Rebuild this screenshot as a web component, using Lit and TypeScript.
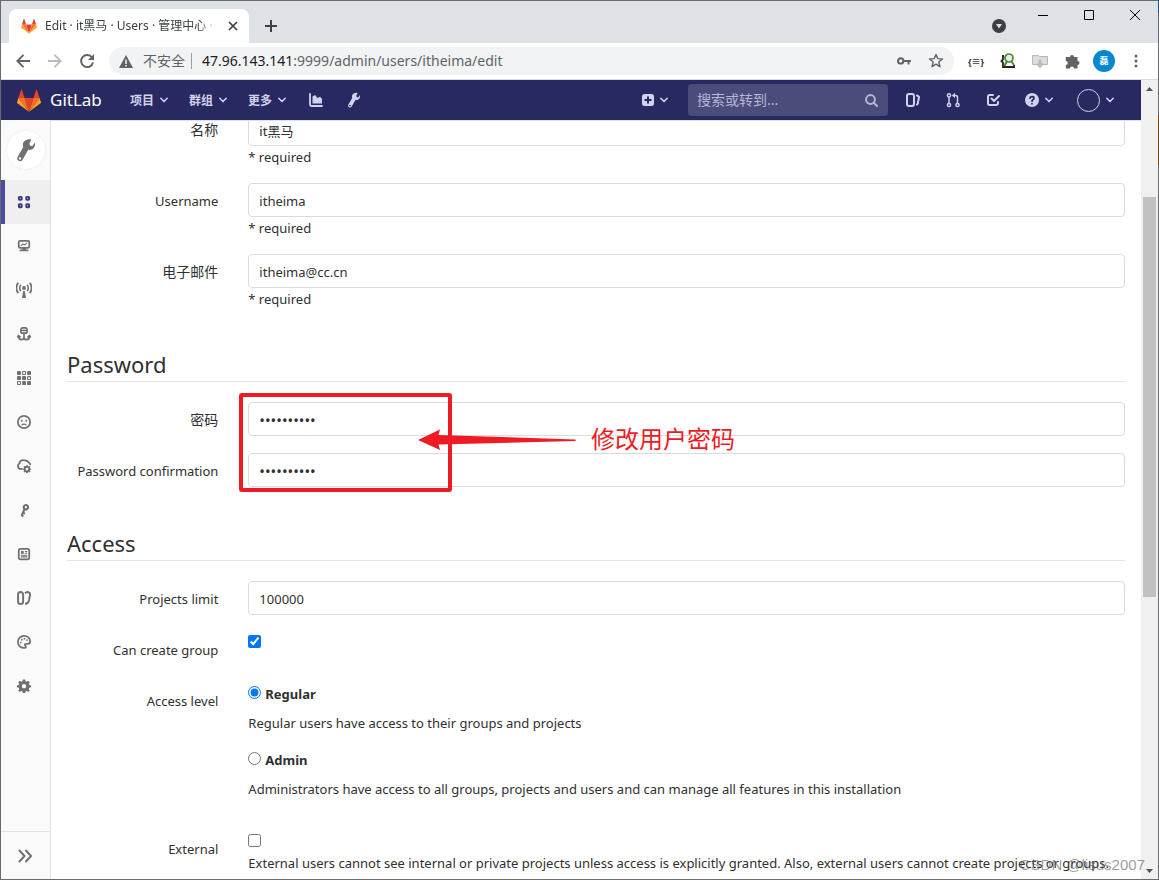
import { LitElement, html, css, svg } from "lit";
import { customElement } from "lit/decorators.js";
import { classMap } from "lit/directives/class-map.js";

const tanuki = html`<svg class="tanuki" viewBox="0 0 36 34" aria-hidden="true">
  <path fill="#e24329" d="M18 34 24.6 13.4H11.4z" />
  <path fill="#fc6d26" d="M18 34 11.4 13.4H2.1z" />
  <path fill="#fca326" d="M2.1 13.4.1 19.6a1.4 1.4 0 0 0 .5 1.5L18 34z" />
  <path fill="#e24329" d="M2.1 13.4h9.3L7.4 1.1a.7.7 0 0 0-1.3 0z" />
  <path fill="#fc6d26" d="M18 34l6.6-20.6h9.3z" />
  <path fill="#fca326" d="M33.9 13.4l2 6.2a1.4 1.4 0 0 1-.5 1.5L18 34z" />
  <path fill="#e24329" d="M33.9 13.4h-9.3l4-12.3a.7.7 0 0 1 1.3 0z" />
</svg>`;

const wrench = svg`<path fill="currentColor" fill-rule="evenodd" d="M11.600.9 10.300 3.600l.4 1.500 1.500.3 1.700-2.300c.4 1.900-.3 3.500-1.700 4.400-.9.500-1.800.6-2.700.4l-3.800 6.600a1.900 1.900 0 0 1-3.300-1.900L6.200 6c-.5-1.100-.4-2.300.2-3.300C7.400 1.200 9.400.4 11.600.9zM4 12.800a.8.8 0 1 0 0 1.600.8.8 0 0 0 0-1.600z"/>`;

const gear = svg`<path fill="currentColor" fill-rule="evenodd" d="M6.700.5h2.600l.4 2 1.300.6 1.800-1.100 1.800 1.800-1.100 1.800.5 1.300 2 .4v2.200l-2 .5-.5 1.300 1.100 1.700-1.700 1.800-1.800-1-1.300.5-.4 2.200H6.600l-.4-2.200-1.300-.5-1.800 1L1.400 13l1.100-1.700L2 10l-2-.5V7.300l2-.4.500-1.300-1.100-1.800L3.200 2 5 3.100l1.300-.6zM8 5.700a2.500 2.500 0 1 0 0 5 2.500 2.500 0 0 0 0-5z"/>`;

const sideItems = [
  { name: "Overview", size: 14, glyph: svg`<g fill="none" stroke="currentColor" stroke-width="2.200"><rect x="2.100" y="2.100" width="3.300" height="3.300" rx=".8"/><rect x="10.600" y="2.100" width="3.300" height="3.300" rx=".8"/><rect x="2.100" y="10.600" width="3.300" height="3.300" rx=".8"/><rect x="10.600" y="10.600" width="3.300" height="3.300" rx=".8"/></g>` },
  { name: "Monitoring", size: 14, glyph: svg`<path fill="none" stroke="currentColor" stroke-width="2" d="M3.500 2h9a1.500 1.500 0 0 1 1.500 1.500v5a1.500 1.500 0 0 1-1.500 1.500h-9A1.500 1.500 0 0 1 2 8.500v-5A1.500 1.500 0 0 1 3.500 2z"/><path fill="none" stroke="currentColor" stroke-width="1.200" d="M4.500 7.800 6.600 5.600l2.200 1.200 2.700-2.400"/><path fill="currentColor" d="M6 10h4v2h2a1 1 0 0 1 1 1v1H3v-1a1 1 0 0 1 1-1h2z"/>` },
  { name: "Messages", size: 16, glyph: svg`<circle cx="8" cy="6" r="1.900" fill="currentColor"/><path fill="currentColor" d="M7.200 9h1.600l1.200 7H6z"/><g fill="none" stroke="currentColor" stroke-width="1.700"><path d="M4.900 3a4.400 4.400 0 0 0 0 6M11.100 3a4.400 4.400 0 0 1 0 6M2.300.8a8 8 0 0 0 0 10.400M13.700.8a8 8 0 0 1 0 10.400"/></g>` },
  { name: "System Hooks", size: 14, glyph: svg`<g fill="none" stroke="currentColor" stroke-width="1.900"><rect x="4.500" y="1" width="7" height="6" rx="2"/><path d="M4.500 4h7M8 7v7.500M1.800 10.500c0 2.700 1.500 4 3.300 4 1.500 0 2.900-1 2.900-2.500 0 1.500 1.400 2.500 2.900 2.500 1.800 0 3.300-1.300 3.300-4M0 11.800l1.800-2 2.200 2M12 11.800l2.200-2 1.800 2"/></g>` },
  { name: "Applications", size: 14, glyph: svg`<g fill="currentColor"><rect x="0" y="0" width="4.500" height="4.500" rx="1"/><rect x="11.500" y="0" width="4.500" height="4.500" rx="1"/><rect x="0" y="5.800" width="4.500" height="4.500" rx="1"/><rect x="5.800" y="5.800" width="4.500" height="4.500" rx="1"/><rect x="5.800" y="11.500" width="4.500" height="4.500" rx="1"/><rect x="11.500" y="11.500" width="4.500" height="4.500" rx="1"/></g><g fill="none" stroke="currentColor" stroke-width="1.200"><rect x="6.400" y=".6" width="3.300" height="3.300" rx=".6"/><rect x="12.100" y="6.400" width="3.300" height="3.300" rx=".6"/><rect x=".6" y="12.100" width="3.300" height="3.300" rx=".6"/></g>` },
  { name: "Abuse Reports", size: 14, glyph: svg`<circle cx="8" cy="8" r="7" fill="none" stroke="currentColor" stroke-width="2"/><circle cx="5.400" cy="6.500" r="1.100" fill="currentColor"/><circle cx="10.600" cy="6.500" r="1.100" fill="currentColor"/><path fill="none" stroke="currentColor" stroke-width="1.400" stroke-linecap="round" d="M5.600 11.300c1.200-1.300 3.600-1.300 4.800 0"/>` },
  { name: "Kubernetes", size: 14, glyph: svg`<path fill="none" stroke="currentColor" stroke-width="2" stroke-linecap="round" d="M5.500 11.300H4.300a3.300 3.300 0 0 1-1.500-6.200C2.800 2.500 5.500.5 8 1.500c1.800-.2 4.500.3 5.200 2.500 1.300.3 1.800 1 1.900 2.200"/><g transform="translate(6.600 6.600) scale(.6)">${gear}</g>` },
  { name: "Deploy Keys", size: 14, glyph: svg`<path fill="none" stroke="currentColor" stroke-width="2.400" d="M10.400 2.300a2.500 2.500 0 1 1-.9 4.900 2.500 2.500 0 0 1 .9-4.900zM8.600 7 5.300 14.500M6.600 11l2.600 1M5 14l2.400.8"/>` },
  { name: "Labels", size: 14, glyph: svg`<rect x="2" y="2" width="12" height="12" rx="2" fill="none" stroke="currentColor" stroke-width="2"/><path fill="currentColor" d="M4.500 4.500h3.200v3.200H4.500zM9 4.500h2.700v1.200H9zM9 6.600h2.700v1.200H9zM4.500 8.800h7.200V10H4.500zM4.500 10.700h7.200v1.200H4.500z"/>` },
  { name: "Integrations", size: 14, glyph: svg`<g fill="none" stroke="currentColor" stroke-width="2.200"><path d="M4 1.200A2.900 2.900 0 0 1 7 4.100v7.800a2.900 2.900 0 0 1-5.800 0V4.100A2.900 2.900 0 0 1 4 1.200z"/><path d="M9.200 2.600c1-1.100 2.400-1.600 3.700-1.200 1.700.5 2.200 2 1.900 3.700l-1 5.500c-.5 2.400-1.900 3.800-4.600 4.200"/></g>` },
  { name: "Appearance", size: 14, glyph: svg`<path fill="none" stroke="currentColor" stroke-width="2" stroke-linejoin="round" d="M9.800 14.500C5.200 15.800 1 12.400 1 8a7 7 0 0 1 7-7c4 0 7 2.700 7 6 0 2-1.300 3-3.200 3H10.500c-1.500 0-1.900 1.300-1 2.200.7.700.9 1.900.3 2.300z"/><g fill="currentColor"><circle cx="4.300" cy="8.600" r="1"/><circle cx="5.500" cy="5.300" r="1"/><circle cx="8.500" cy="4.200" r="1"/><circle cx="11.500" cy="5.800" r="1"/></g>` },
  { name: "Settings", size: 14, glyph: gear },
];

const chevron = html`<svg class="chevron" viewBox="0 0 8 6" aria-hidden="true"><path fill="none" stroke="currentColor" stroke-width="1.500" stroke-linecap="round" stroke-linejoin="round" d="M.8 1.200 4 4.600 7.200 1.200" /></svg>`;

@customElement("browser-chrome")
export class BrowserChrome extends LitElement {
  static styles = css`
    :host { display: block; font-family: "Noto Sans", "Noto Sans CJK SC", sans-serif; color: #3c4043; }
    * { box-sizing: border-box; }
    button { border: 0; padding: 0; margin: 0; background: none; color: inherit; font: inherit; display: flex; align-items: center; justify-content: center; flex: none; }
    svg { display: block; flex: none; }
    .tabs { height: 42px; background: #dee1e6; display: flex; align-items: flex-start; padding: 8px 0 0 8px; }
    .tab { width: 240px; height: 34px; flex: none; background: #fff; border-radius: 8px 8px 0 0; display: flex; align-items: center; padding: 0 8px 0 12px; gap: 8px; }
    .tab .tanuki { width: 16px; height: 16px; }
    .title { flex: 1; min-width: 0; font-size: 12px; line-height: 16px; white-space: nowrap; overflow: hidden; -webkit-mask-image: linear-gradient(90deg, #000 90%, transparent); mask-image: linear-gradient(90deg, #000 90%, transparent); }
    .close { width: 16px; height: 16px; }
    .plus { width: 28px; height: 34px; margin-left: 8px; }
    .down { margin: 10px 14px 0 auto; }
    .win { width: 46px; height: 28px; margin-top: -8px; color: #000; }
    .bar { height: 37px; background: #fff; border-bottom: 1px solid #dadce0; display: flex; align-items: center; padding: 0 8px; color: #5f6368; }
    .go { width: 28px; height: 28px; margin-right: 4px; }
    .dim { color: #babcbe; }
    .address { flex: 1; min-width: 0; height: 28px; margin: 0 4px; border-radius: 14px; background: #f1f3f4; display: flex; align-items: center; padding: 0 10px; gap: 10px; font-size: 14px; }
    .secure { white-space: nowrap; line-height: 16px; padding-right: 6px; border-right: 1px solid #9aa0a6; height: 16px; }
    .url { flex: 1; min-width: 0; line-height: 20px; white-space: nowrap; overflow: hidden; }
    .host { color: #202124; }
    .star { margin-left: 7px; }
    .ext { width: 28px; height: 28px; margin-left: 4px; font-size: 9px; font-weight: 700; color: #333; }
    .face { width: 22px; height: 22px; border-radius: 11px; background: #0288d1; color: #fff; font-size: 9px; line-height: 12px; display: flex; align-items: center; justify-content: center; }
    .grey { color: #5f6368; }
  `;
  render() {
    return html`
      <div class="tabs">
        <div class="tab">${tanuki}
          <span class="title">Edit · it黑马 · Users · 管理中心 · GitLab</span>
          <button class="close" aria-label="Close tab"><svg width="10" height="10" viewBox="0 0 10 10"><path stroke="currentColor" stroke-width="1.700" d="m1 1 8 8M9 1 1 9" /></svg></button>
        </div>
        <button class="plus" aria-label="New tab"><svg width="12" height="12" viewBox="0 0 12 12"><path stroke="currentColor" stroke-width="2" d="M6 0v12M0 6h12" /></svg></button>
        <button class="down" aria-label="Search tabs"><svg width="14" height="14" viewBox="0 0 14 14"><circle cx="7" cy="7" r="7" fill="currentColor" /><path fill="#dee1e6" d="M4 5h6L7 9.500z" /></svg></button>
        <button class="win" aria-label="Minimize"><svg width="10" height="10" viewBox="0 0 10 10"><path stroke="currentColor" d="M0 5.500h10" /></svg></button>
        <button class="win" aria-label="Maximize"><svg width="10" height="10" viewBox="0 0 10 10"><path fill="none" stroke="currentColor" d="M.5.5h9v9h-9z" /></svg></button>
        <button class="win" aria-label="Close"><svg width="10" height="10" viewBox="0 0 10 10"><path stroke="currentColor" d="m0 0 10 10M10 0 0 10" /></svg></button>
      </div>
      <div class="bar">
        <button class="go" aria-label="Back"><svg width="14" height="14" viewBox="0 0 14 14"><path fill="none" stroke="currentColor" stroke-width="1.900" d="M14 7H1.500M7.500.8 1.300 7l6.200 6.200" /></svg></button>
        <button class="go dim" aria-label="Forward"><svg width="14" height="14" viewBox="0 0 14 14"><path fill="none" stroke="currentColor" stroke-width="1.900" d="M0 7h12.500M6.500.8 12.700 7l-6.200 6.200" /></svg></button>
        <button class="go" aria-label="Reload"><svg width="14" height="14" viewBox="0 0 14 14"><path fill="none" stroke="currentColor" stroke-width="1.900" d="M12 3.500A6 6 0 1 0 13 8.500" /><path fill="currentColor" d="M14 0v6H8z" /></svg></button>
        <div class="address">
          <svg width="14" height="13" viewBox="0 0 14 13"><path fill="#5f6368" d="M7 0l7 13H0z" /><path stroke="#f1f3f4" stroke-width="1.500" d="M7 4.500V9M7 10v1.500" /></svg>
          <span class="secure">不安全</span>
          <span class="url"><span class="host">47.96.143.141</span>:9999/admin/users/itheima/edit</span>
          <button aria-label="Passwords"><svg width="14" height="8" viewBox="0 0 14 8"><path fill="none" stroke="currentColor" stroke-width="2" d="M3.700 1.200a2.700 2.700 0 1 0 0 5.400 2.700 2.700 0 0 0 0-5.400zM6.300 4H14M11.500 4v3.500" /></svg></button>
          <button class="star" aria-label="Bookmark"><svg width="16" height="16" viewBox="-1 0 16 16"><path fill="none" stroke="currentColor" stroke-width="1.400" stroke-linejoin="round" d="m7 1.400 1.700 4.200 4.800.4-3.700 3 1.200 4.700L7 11.200 3 13.700 4.200 9 .5 6l4.800-.4z" /></svg></button>
        </div>
        <button class="ext" aria-label="JSON viewer">{≡}</button>
        <button class="ext" aria-label="Inspector"><svg width="16" height="16" viewBox="0 0 16 16"><path fill="none" stroke="#222" stroke-width="1.800" d="M4 3H3v3.500L1.500 8 3 9.500V14h11v-2" /><circle cx="9" cy="5" r="4" fill="#e3f1ee" stroke="#4b8a2c" stroke-width="1.700" /><path stroke="#4b8a2c" stroke-width="2" d="M7 8 4.500 13M11 8l3 4" /></svg></button>
        <button class="ext" aria-label="Downloads"><svg width="16" height="15" viewBox="0 0 16 15"><path fill="#dcdcdc" stroke="#b7b7b7" d="M.5 1.500h6l1 1h8v8H.5z" /><path fill="#c4c4c4" stroke="#aaa" stroke-width=".6" d="M7 6h2v4h2.500L8 14l-3.500-4H7z" /></svg></button>
        <button class="ext grey" aria-label="Extensions"><svg width="15" height="15" viewBox="0 0 15 15"><path fill="currentColor" d="M1.500 3H5a2 2 0 1 1 4 0h3.500v4a2 2 0 1 1 0 4v3.500H9a2 2 0 0 0-4 0H.8V11a2 2 0 0 0 0-4V3z" /></svg></button>
        <button class="ext" aria-label="Profile"><span class="face">磊</span></button>
        <button class="ext grey" aria-label="Menu"><svg width="4" height="14" viewBox="0 0 4 14"><g fill="currentColor"><circle cx="2" cy="2" r="1.500" /><circle cx="2" cy="7" r="1.500" /><circle cx="2" cy="12" r="1.500" /></g></svg></button>
      </div>`;
  }
}

@customElement("gl-navbar")
export class GlNavbar extends LitElement {
  static styles = css`
    :host { display: block; flex: none; }
    * { box-sizing: border-box; }
    svg { display: block; flex: none; }
    .nav { height: 40px; background: #292961; color: #d1d1f0; display: flex; align-items: center; padding: 0 27px 0 16px; font-family: "Noto Sans", "Noto Sans CJK SC", sans-serif; font-size: 12px; }
    .brand { display: flex; align-items: center; gap: 9px; color: #fff; text-decoration: none; font-size: 17px; line-height: 24px; width: 113px; }
    .tanuki { width: 24px; height: 23px; }
    button { border: 0; padding: 0; background: none; color: inherit; font: inherit; font-weight: 700; display: flex; align-items: center; gap: 6px; white-space: nowrap; }
    .menus { display: flex; gap: 21px; margin-right: 23px; }
    .icons { display: flex; gap: 23px; }
    .new { margin-left: auto; margin-right: 20px; }
    .chevron { width: 8px; height: 6px; }
    .search { width: 200px; height: 32px; border-radius: 4px; background: #4b4b7c; display: flex; align-items: center; padding: 0 10px 0 9px; margin-right: 17px; }
    input { flex: 1; min-width: 0; border: 0; padding: 0; background: none; color: #d1d1f0; font-family: inherit; font-size: 14px; line-height: 20px; outline: 0; }
    input::placeholder { color: #b6b6d6; opacity: 1; }
    .right { display: flex; gap: 24px; align-items: center; }
    .avatar { width: 23px; height: 23px; border: 1px solid #d1d1f0; border-radius: 12px; }
  `;
  render() {
    return html`<header class="nav">
      <a class="brand" href="#">${tanuki}<span>GitLab</span></a>
      <div class="menus">
        <button>项目 ${chevron}</button><button>群组 ${chevron}</button><button>更多 ${chevron}</button>
      </div>
      <div class="icons">
        <button aria-label="Analytics"><svg width="14" height="14" viewBox="0 0 14 14"><path fill="none" stroke="currentColor" stroke-width="1.800" stroke-linecap="round" d="M1 1v10.500A1.500 1.500 0 0 0 2.500 13H13" /><path fill="currentColor" d="M3.500 3.500 6 2l2.500 3L11 3.800l2 2V10.500H3.500z" /></svg></button>
        <button aria-label="Admin area"><svg width="16" height="16" viewBox="0 0 16 16">${wrench}</svg></button>
      </div>
      <button class="new" aria-label="New"><svg width="12" height="12" viewBox="0 0 12 12"><rect width="12" height="12" rx="2.500" fill="currentColor" /><path stroke="#292961" stroke-width="2" d="M6 2.500v7M2.500 6h7" /></svg>${chevron}</button>
      <label class="search"><input aria-label="搜索或转到" placeholder="搜索或转到..." /><svg width="13" height="13" viewBox="0 0 13 13"><circle cx="5.500" cy="5.500" r="4.400" fill="none" stroke="#b6b6d6" stroke-width="2" /><path stroke="#b6b6d6" stroke-width="2" stroke-linecap="round" d="m9 9 3 3" /></svg></label>
      <div class="right">
        <button aria-label="Issues"><svg width="16" height="16" viewBox="0 0 16 16"><g fill="none" stroke="currentColor" stroke-width="2"><rect x="2" y="2" width="7" height="12" rx="2" /><path stroke-linecap="round" d="m12 3.500 1.500.8a1 1 0 0 1 .5 1.100l-1.300 6.300a1 1 0 0 1-.7.800" /></g></svg></button>
        <button aria-label="Merge requests"><svg width="16" height="16" viewBox="0 0 16 16"><g fill="none" stroke="currentColor" stroke-width="1.500"><circle cx="4" cy="3.300" r="1.600" /><circle cx="4" cy="13" r="1.600" /><circle cx="12.500" cy="13" r="1.600" /><path d="M4 5v6.500M12.500 11.500V5.500A2 2 0 0 0 10.500 3.500H9" /></g><path fill="currentColor" d="M6.800 3.400 10 .8V6z" /></svg></button>
        <button aria-label="To-Do"><svg width="16" height="16" viewBox="0 0 16 16"><path fill="none" stroke="currentColor" stroke-width="2" stroke-linecap="round" stroke-linejoin="round" d="M8 3H4.500A1.500 1.500 0 0 0 3 4.500v7A1.500 1.500 0 0 0 4.500 13H11a2 2 0 0 0 2-2V10M6.500 6.500l2.500 2.500L14 4" /></svg></button>
        <button aria-label="Help"><svg width="14" height="14" viewBox="0 0 14 14"><circle cx="7" cy="7" r="7" fill="currentColor" /><path fill="none" stroke="#292961" stroke-width="1.700" stroke-linecap="round" d="M5 5.200C5.200 3.200 9 3.200 9 5.200 9 6.500 7 6.500 7 8.200M7 10.700v.1" /></svg>${chevron}</button>
        <button aria-label="Account"><span class="avatar"></span>${chevron}</button>
      </div>
    </header>`;
  }
}

@customElement("gl-sidebar")
export class GlSidebar extends LitElement {
  static styles = css`
    :host { display: block; width: 50px; flex: none; }
    * { box-sizing: border-box; }
    .side { height: 100%; background: #fafafa; border-right: 1px solid #e1e1e1; display: flex; flex-direction: column; color: #707070; }
    a { color: inherit; height: 44px; display: flex; align-items: center; justify-content: center; padding-right: 3px; flex: none; }
    .context { height: 60px; padding: 0; }
    .disc { width: 38px; height: 38px; border-radius: 19px; background: #fff; box-shadow: 0 0 0 1px #f2f2f2; display: flex; align-items: center; justify-content: center; }
    .active { background: #efefef; color: #393982; box-shadow: inset 4px 0 0 #4b4ba3; }
    .toggle { margin-top: auto; height: 48px; border: 0; border-top: 1px solid #e1e1e1; background: none; color: inherit; padding: 0 2px 0 0; display: flex; align-items: center; justify-content: center; flex: none; }
  `;
  render() {
    return html`<nav class="side">
      <a class="context" href="#" aria-label="Admin Area"><span class="disc"><svg width="24" height="24" viewBox="0 0 16 16">${wrench}</svg></span></a>
      ${sideItems.map((item, i) => html`<a href="#" aria-label=${item.name} class=${classMap({ active: i === 0 })}><svg width=${item.size} height=${item.size} viewBox="0 0 16 16">${item.glyph}</svg></a>`)}
      <button class="toggle" aria-label="Expand sidebar"><svg width="14" height="14" viewBox="0 0 14 14"><path fill="none" stroke="currentColor" stroke-width="1.900" stroke-linecap="round" stroke-linejoin="round" d="m1.500 1.500 5 5.500-5 5.500M8 1.500 13 7l-5 5.500" /></svg></button>
    </nav>`;
  }
}

@customElement("user-form")
export class UserForm extends LitElement {
  static styles = css`
    :host { display: block; }
    * { box-sizing: border-box; }
    form { padding: 0 16px; margin-top: -9px; font-family: "Noto Sans", "Noto Sans CJK SC", sans-serif; font-size: 13px; line-height: 20px; color: #303030; }
    h2 { margin: 0 0 20px; height: 57px; padding-bottom: 2px; border-bottom: 1px solid #e5e5e5; font-size: 22px; font-weight: 400; line-height: 30px; display: flex; align-items: flex-end; }
    .row { display: grid; grid-template-columns: 1fr 5fr; margin: 0 -15px 17px; }
    .row > * { min-width: 0; padding: 0 15px; }
    .row > .name { text-align: right; padding-top: 8px; white-space: nowrap; }
    .name:lang(zh) { font-size: 14px; }
    .text { display: block; width: 100%; height: 34px; border: 1px solid #dbdbdb; border-radius: 4px; background: #fff; color: #303030; font: inherit; padding: 7px 10px 5px; outline: 0; }
    .text[type="password"] { font-size: 15px; }
    .help { display: block; margin: 1px 0 -1px; }
    .check { min-height: 34px; }
    .box { display: block; width: 13px; height: 13px; margin: 3px 0 0; accent-color: #0075ff; }
    .box + .help { margin-top: 6px; }
    .option { display: flex; gap: 4px; font-weight: 700; padding-top: 1px; margin-bottom: 9px; }
    .option input { width: 13px; height: 13px; margin: 2px 0 0; accent-color: #0075ff; }
    .note { margin: 0 0 16px; }
    .note:last-child { margin-bottom: 15px; }
    .passwords { position: relative; }
    .mark { position: absolute; left: 172px; top: -9px; pointer-events: none; }
    .caption { position: absolute; left: 524px; top: 19px; color: #ed1c24; font-size: 24px; line-height: 36px; white-space: nowrap; }
  `;
  field(id: string, label: string, value: string, required = false, type = "text", lang = "en") {
    return html`<div class="row"><label class="name" lang=${lang} for=${id}>${label}</label>
      <div><input class="text" id=${id} type=${type} .value=${value} />${required ? html`<span class="help">* required</span>` : ""}</div></div>`;
  }
  render() {
    return html`<form>
      ${this.field("name", "名称", "it黑马", true, "text", "zh")}
      ${this.field("username", "Username", "itheima", true)}
      ${this.field("email", "电子邮件", "itheima@cc.cn", true, "text", "zh")}
      <h2>Password</h2>
      <div class="passwords">
        ${this.field("password", "密码", "1234567890", false, "password", "zh")}
        ${this.field("confirm", "Password confirmation", "1234567890", false, "password")}
        <svg class="mark" width="338" height="100" viewBox="0 0 338 100" aria-hidden="true"><rect x="2" y="2" width="209" height="95" rx="1" fill="none" stroke="#ed1c24" stroke-width="4" /><path fill="#ed1c24" d="M179 47 201 36.500 199.500 42 336 46.500a.7.700 0 0 1 0 1.500L199.500 51.500 201 57z" /></svg>
        <span class="caption">修改用户密码</span>
      </div>
      <h2>Access</h2>
      ${this.field("limit", "Projects limit", "100000")}
      <div class="row check"><label class="name" for="group">Can create group</label><div><input class="box" id="group" type="checkbox" checked /></div></div>
      <div class="row"><span class="name" id="level">Access level</span>
        <div role="radiogroup" aria-labelledby="level">
          <label class="option"><input type="radio" name="level" checked /><span>Regular</span></label>
          <p class="note">Regular users have access to their groups and projects</p>
          <label class="option"><input type="radio" name="level" /><span>Admin</span></label>
          <p class="note">Administrators have access to all groups, projects and users and can manage all features in this installation</p>
        </div></div>
      <div class="row"><label class="name" for="external">External</label>
        <div><input class="box" id="external" type="checkbox" /><span class="help">External users cannot see internal or private projects unless access is explicitly granted. Also, external users cannot create projects or groups.</span></div></div>
    </form>`;
  }
}

@customElement("app-root")
export class AppRoot extends LitElement {
  static styles = css`
    :host { display: block; position: relative; height: 100vh; }
    :host::after { content: ""; position: absolute; top: 0; right: 0; bottom: 0; width: 1px; background: linear-gradient(#1d4f7c 0 13px, #6b6b6f 13px 115px, #7a4a0c 115px 165px, #6b6b6f 165px); }
    * { box-sizing: border-box; }
    .window { position: relative; height: 100%; border: 1px solid #6b6b6f; display: flex; flex-direction: column; overflow: hidden; background: #fff; }
    .page { flex: 1; min-height: 0; display: flex; }
    .app { flex: 1; min-width: 0; display: flex; flex-direction: column; }
    .body { flex: 1; min-height: 0; display: flex; }
    main { flex: 1; min-width: 0; overflow: hidden; border-top: 1px solid #e1e1e1; }
    .scroll { width: 17px; flex: none; background: #f0f0f0; display: grid; grid-template-rows: 17px 100fr 400fr 265fr 17px; justify-items: center; align-items: center; }
    .thumb { grid-row: 3; width: 13px; height: 100%; background: #c1c1c1; }
    .down { grid-row: 5; }
    .watermark { position: absolute; right: 13px; bottom: 5px; font-family: "Liberation Sans", sans-serif; font-size: 15px; line-height: 18px; color: rgba(90, 90, 90, 0.6); white-space: nowrap; }
  `;
  render() {
    return html`<div class="window">
      <browser-chrome></browser-chrome>
      <div class="page">
        <div class="app">
          <gl-navbar></gl-navbar>
          <div class="body"><gl-sidebar></gl-sidebar><main><user-form></user-form></main></div>
        </div>
        <div class="scroll">
          <svg width="7" height="4" viewBox="0 0 7 4"><path fill="#505050" d="M0 4 3.500 0 7 4z" /></svg>
          <div class="thumb"></div>
          <svg class="down" width="7" height="4" viewBox="0 0 7 4"><path fill="#505050" d="M0 0 3.500 4 7 0z" /></svg>
        </div>
      </div>
      <span class="watermark">CSDN @lisus2007</span>
    </div>`;
  }
}
